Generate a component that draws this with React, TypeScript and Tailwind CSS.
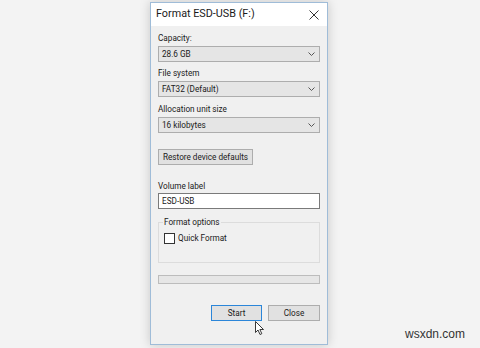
import React from 'react';

function Combo({ value }: { value: string }) {
  return (
    <div className="flex items-center justify-between h-[16px] bg-[#e5e5e5] border border-[#adadad] pl-[3px] pr-[4px]">
      <span className="text-[8.2px] leading-none text-[#1a1a1a]">{value}</span>
      <svg width="7" height="4" viewBox="0 0 7 4" className="shrink-0">
        <path d="M0.5 0.5 L3.5 3.5 L6.5 0.5" fill="none" stroke="#555" strokeWidth="1" />
      </svg>
    </div>
  );
}

function Label({ children }: { children: React.ReactNode }) {
  return <div className="h-[14px] flex items-center text-[8.2px] text-[#1a1a1a]">{children}</div>;
}

export default function App() {
  return (
    <div
      className="relative w-[480px] h-[348px] bg-[#f3f3f3] overflow-hidden"
      style={{ fontFamily: 'Roboto, "Noto Sans", sans-serif' }}
    >
      <div className="ml-[150px] mt-[2px] w-[178px] border border-[#9fbcd8] bg-[#f0f0f0] shadow-[0_0_10px_rgba(0,0,0,0.18)]">
        <div className="h-[23px] bg-white flex items-center justify-between pl-[5px] pr-[8px]">
          <span className="text-[10.8px] text-[#1a1a1a]">Format ESD-USB (F:)</span>
          <svg width="10" height="10" viewBox="0 0 10 10">
            <path d="M0.5 0.5 L9.5 9.5 M9.5 0.5 L0.5 9.5" stroke="#333" strokeWidth="1" />
          </svg>
        </div>

        <div className="px-[7px] pt-[5px] pb-[23px] flex flex-col">
          <Label>Capacity:</Label>
          <div className="mt-[1px]">
            <Combo value="28.6 GB" />
          </div>

          <div className="mt-[4px]">
            <Label>File system</Label>
          </div>
          <div className="mt-[1px]">
            <Combo value="FAT32 (Default)" />
          </div>

          <div className="mt-[5px]">
            <Label>Allocation unit size</Label>
          </div>
          <div className="mt-[1px]">
            <Combo value="16 kilobytes" />
          </div>

          <button className="mt-[16px] w-[95px] h-[16px] bg-[#e1e1e1] border border-[#adadad] text-[8.2px] leading-none text-[#1a1a1a]">
            Restore device defaults
          </button>

          <div className="mt-[14px]">
            <Label>Volume label</Label>
          </div>
          <div className="h-[16px] bg-white border border-[#7a7a7a] flex items-center pl-[3px] text-[8.2px] text-[#1a1a1a]">
            ESD-USB
          </div>

          <div className="relative mt-[13px] h-[41px] border border-[#dcdcdc] pt-[9px] pl-[5px]">
            <span className="absolute -top-[8px] left-[4px] px-[1px] bg-[#f0f0f0] text-[8.2px] leading-[14px] text-[#1a1a1a]">
              Format options
            </span>
            <div className="flex items-center gap-[3px]">
              <div className="w-[11px] h-[11px] bg-white border border-[#333]" />
              <span className="text-[8.2px] text-[#1a1a1a]">Quick Format</span>
            </div>
          </div>

          <div className="mt-[12px] h-[9px] bg-[#e6e6e6] border border-[#bcbcbc]" />

          <div className="mt-[21px] flex justify-end gap-[6px]">
            <button className="w-[51px] h-[16px] bg-[#e1e1e1] border border-[#2b86d9] text-[8.2px] leading-none text-[#1a1a1a]">
              Start
            </button>
            <button className="w-[52px] h-[16px] bg-[#e1e1e1] border border-[#adadad] text-[8.2px] leading-none text-[#1a1a1a]">
              Close
            </button>
          </div>
        </div>
      </div>

      <svg className="absolute left-[255px] top-[321px]" width="10" height="15" viewBox="0 0 10 15">
        <path d="M0.5 0.5 L0.5 11.5 L3 9 L5 13.5 L6.8 12.7 L4.9 8.5 L8.5 8.5 Z" fill="#fff" stroke="#222" strokeWidth="0.9" strokeLinejoin="round" />
      </svg>

      <span
        className="absolute left-[405px] top-[325px] text-[12px] text-[#333]"
        style={{ fontFamily: '"Liberation Sans", Arial, sans-serif' }}
      >
        wsxdn.com
      </span>
    </div>
  );
}
